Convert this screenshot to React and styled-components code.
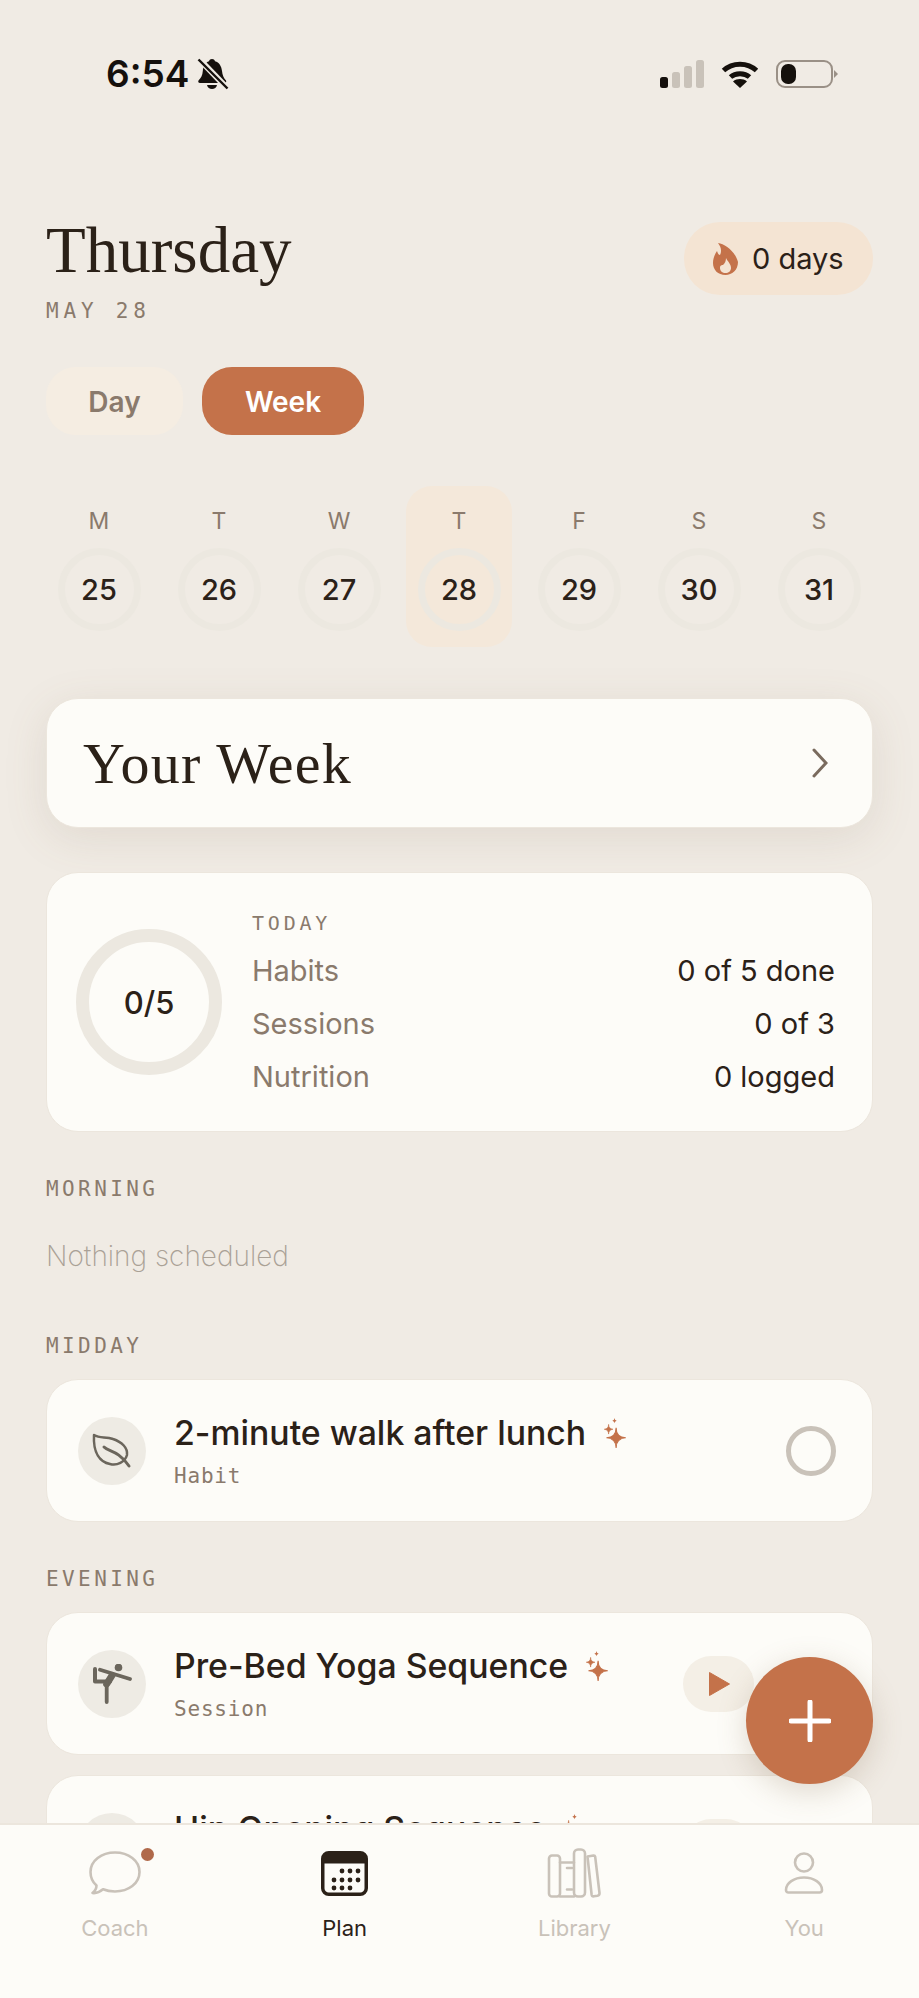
import React from "react";
import styled, { createGlobalStyle } from "styled-components";

const colors = {
  bg: "#f0ebe4",
  card: "#fdfcf8",
  ink: "#2b2118",
  muted: "#8a7a6c",
  faint: "#c9c2b9",
  accent: "#c4724a",
  peach: "#f4e4d3",
  ring: "#ece8e0",
  line: "#ece6dd",
  iconInk: "#6b665c",
};

const sans = `Inter, "Noto Sans", sans-serif`;
const serif = `"Liberation Serif", serif`;
const mono = `"DejaVu Sans Mono", "Liberation Mono", monospace`;

const GlobalStyle = createGlobalStyle`
  html, body {
    margin: 0;
    padding: 0;
    background: ${colors.bg};
  }
  * {
    box-sizing: border-box;
  }
`;

const Page = styled.div`
  position: relative;
  width: 919px;
  height: 1998px;
  display: flex;
  flex-direction: column;
  overflow: hidden;
  background: ${colors.bg};
  font-family: ${sans};
  color: ${colors.ink};
`;

const StatusBar = styled.div`
  display: flex;
  justify-content: space-between;
  align-items: center;
  height: 32px;
  margin-top: 58px;
  padding: 0 81px 0 106px;
  flex: none;
`;

const StatusGroup = styled.div`
  display: flex;
  align-items: center;
  gap: ${(p) => p.$gap}px;
`;

const Time = styled.span`
  font-size: 37px;
  font-weight: 600;
  line-height: 32px;
  color: #15100c;
`;

const Main = styled.main`
  flex: 1;
  min-height: 0;
  overflow: hidden;
  padding: 124px 46px 0;
`;

const Header = styled.header`
  display: flex;
  justify-content: space-between;
  align-items: flex-start;
`;

const Title = styled.h1`
  margin: 0;
  font-family: ${serif};
  font-size: 65px;
  font-weight: 400;
  line-height: 72px;
`;

const DateLine = styled.div`
  margin-top: 12px;
  margin-bottom: -1px;
  font-family: ${mono};
  font-size: 21px;
  line-height: 26px;
  letter-spacing: 4.800px;
  color: ${colors.muted};
`;

const Streak = styled.div`
  display: flex;
  align-items: center;
  gap: 14px;
  width: 189px;
  height: 73px;
  margin-top: 8px;
  padding-left: 29px;
  border-radius: 36px;
  background: ${colors.peach};
  font-size: 29px;
  white-space: nowrap;
`;

const Toggle = styled.div`
  display: flex;
  gap: 19px;
  margin-top: 44px;
`;

const ToggleButton = styled.div`
  display: flex;
  align-items: center;
  justify-content: center;
  width: ${(p) => p.$width}px;
  height: 68px;
  padding-top: 2px;
  border-radius: 30px;
  font-size: 28px;
  font-weight: 600;
  background: ${(p) => (p.$active ? colors.accent : "#f5ede2")};
  color: ${(p) => (p.$active ? "#fff" : colors.muted)};
`;

const Calendar = styled.div`
  display: grid;
  grid-template-columns: repeat(7, 106px);
  gap: 14px;
  margin-top: 51px;
`;

const DayColumn = styled.div`
  display: flex;
  flex-direction: column;
  align-items: center;
  gap: 15px;
  height: 161px;
  padding-top: 23px;
  border-radius: 26px;
  background: ${(p) => (p.$selected ? "#f4e8da" : "transparent")};
`;

const DayLetter = styled.div`
  font-size: 23px;
  line-height: 24px;
  color: ${colors.muted};
`;

const DayCircle = styled.div`
  display: flex;
  align-items: center;
  justify-content: center;
  width: 83px;
  height: 83px;
  border: 7px solid ${colors.ring};
  border-radius: 50%;
  font-size: 29px;
  font-weight: 500;
`;

const Card = styled.div`
  background: ${colors.card};
  border: 1px solid ${colors.line};
  border-radius: 32px;
`;

const WeekCard = styled(Card)`
  display: flex;
  align-items: center;
  justify-content: space-between;
  height: 130px;
  margin-top: 51px;
  padding: 0 44px 0 36px;
  box-shadow: 0 10px 44px rgba(120, 100, 80, 0.13);
`;

const WeekTitle = styled.div`
  padding-top: 2px;
  font-family: ${serif};
  font-size: 58px;
  line-height: 66px;
  letter-spacing: 1.300px;
`;

const TodayCard = styled(Card)`
  display: flex;
  align-items: center;
  gap: 30px;
  height: 260px;
  margin-top: 44px;
  padding: 0 37px 0 29px;
`;

const Ring = styled.div`
  display: flex;
  align-items: center;
  justify-content: center;
  flex: none;
  width: 146px;
  height: 146px;
  border: 13px solid ${colors.ring};
  border-radius: 50%;
  font-size: 31px;
  font-weight: 500;
`;

const Summary = styled.div`
  flex: 1;
  display: flex;
  flex-direction: column;
  gap: 17px;
`;

const SummaryLabel = styled.div`
  margin-bottom: 1px;
  padding-top: 2px;
  font-family: ${mono};
  font-size: 20px;
  line-height: 24px;
  letter-spacing: 3.800px;
  color: ${colors.muted};
`;

const SummaryRow = styled.div`
  display: flex;
  justify-content: space-between;
  font-size: 29px;
  line-height: 36px;
`;

const SummaryName = styled.span`
  color: ${colors.muted};
`;

const Section = styled.section`
  margin-top: 45px;
`;

const SectionLabel = styled.div`
  margin-bottom: 21px;
  font-family: ${mono};
  font-size: 21px;
  line-height: 24px;
  letter-spacing: 3.400px;
  color: ${colors.muted};
`;

const Empty = styled.div`
  padding: 16px 0 15px;
  font-size: 28px;
  font-weight: 200;
  line-height: 36px;
  color: #aaa196;
`;

const ItemList = styled.div`
  display: flex;
  flex-direction: column;
  gap: 20px;
`;

const ItemCard = styled(Card)`
  display: flex;
  align-items: center;
  flex: none;
  height: 143px;
  padding: 0 36px 0 31px;
`;

const ItemIcon = styled.div`
  display: flex;
  align-items: center;
  justify-content: center;
  flex: none;
  width: 68px;
  height: 68px;
  margin-right: 28px;
  border-radius: 50%;
  background: #eeebe4;
`;

const ItemBody = styled.div`
  flex: 1;
  min-width: 0;
`;

const ItemTitle = styled.div`
  display: flex;
  align-items: flex-start;
  gap: 17px;
  font-size: 33.800px;
  font-weight: 500;
  line-height: 40px;
`;

const ItemType = styled.div`
  margin-top: 10px;
  font-family: ${mono};
  font-size: 21px;
  line-height: 26px;
  letter-spacing: 0.800px;
  color: ${colors.muted};
`;

const CheckCircle = styled.div`
  flex: none;
  width: 50px;
  height: 50px;
  border: 5px solid ${colors.faint};
  border-radius: 50%;
`;

const PlayButton = styled.div`
  display: flex;
  align-items: center;
  justify-content: center;
  flex: none;
  width: 71px;
  height: 56px;
  margin-right: 82px;
  border-radius: 28px;
  background: #f4efe6;
`;

const Fab = styled.div`
  position: absolute;
  right: 46px;
  bottom: 214px;
  display: flex;
  align-items: center;
  justify-content: center;
  width: 127px;
  height: 127px;
  border-radius: 50%;
  background: ${colors.accent};
  box-shadow: 0 8px 30px rgba(120, 90, 60, 0.22);
`;

const Nav = styled.nav`
  display: grid;
  grid-template-columns: repeat(4, 1fr);
  flex: none;
  height: 175px;
  padding-top: 23px;
  border-top: 2px solid ${colors.line};
  background: ${colors.card};
`;

const NavItem = styled.div`
  display: flex;
  flex-direction: column;
  align-items: center;
  gap: 15px;
  font-size: 22px;
  line-height: 30px;
  color: ${(p) => (p.$active ? colors.ink : colors.faint)};
`;

const NavIcon = styled.div`
  position: relative;
  display: flex;
  align-items: center;
  justify-content: center;
  height: 50px;
`;

const NavDot = styled.span`
  position: absolute;
  top: 0;
  right: -13px;
  width: 13px;
  height: 13px;
  border-radius: 50%;
  background: #b0694a;
`;

const BellOff = () => (
  <svg width="32" height="32" viewBox="0 0 32 32">
    <path
      d="M15 1c1.500 0 2.600.9 3 2.300 4.300 1.200 6.500 5 7 9.700.4 4 1.500 7 4 9.500.6 1.200 0 2.500-1.500 2.500H3c-1.500 0-2.200-1.300-1.500-2.500 2.500-2.500 4-5 4.300-9.500C6.200 8 8.500 4.500 12 3.300 12.400 1.900 13.500 1 15 1Z"
      fill="#15100c"
    />
    <path d="M10 27h10c-.5 2.500-2.500 4-5 4s-4.500-1.500-5-4Z" fill="#15100c" />
    <path d="M3 2l27 28" stroke={colors.bg} strokeWidth="6" />
    <path d="M1.500 1.500l29 29" stroke="#15100c" strokeWidth="2.400" />
  </svg>
);

const Signal = () => (
  <svg width="44" height="28" viewBox="0 0 44 28">
    <rect x="0" y="17" width="8" height="11" rx="2.500" fill="#15100c" />
    <rect x="12" y="12" width="8" height="16" rx="2.500" fill="#c9c2b9" />
    <rect x="24" y="6" width="8" height="22" rx="2.500" fill="#c9c2b9" />
    <rect x="36" y="0" width="8" height="28" rx="2.500" fill="#c9c2b9" />
  </svg>
);

const Wifi = () => (
  <svg width="38" height="28" viewBox="0 0 38 28">
    <path d="M2.500 10.500C11.500 2 26.500 2 35.500 10.500" fill="none" stroke="#15100c" strokeWidth="5" />
    <path d="M9.500 17C14.500 12.500 23.500 12.500 28.500 17" fill="none" stroke="#15100c" strokeWidth="5" />
    <path d="M19 28l-7-6.500c4-3.200 10-3.200 14 0Z" fill="#15100c" />
  </svg>
);

const Battery = () => (
  <svg width="62" height="28" viewBox="0 0 62 28">
    <rect x="1" y="1" width="55" height="26" rx="8" fill="none" stroke="#9a9086" strokeWidth="2" />
    <rect x="5" y="4" width="15" height="20" rx="7" fill="#15100c" />
    <path d="M58 10l4 4-4 4Z" fill="#9a9086" />
  </svg>
);

const Flame = () => (
  <svg width="25" height="32" viewBox="0 0 25 32">
    <path
      d="M5 0C12 1 22 8 25 19C25 27 19 32 12.500 32C5 32 0 27 0 20C0 15 2 11 4 8C5 11 6 12 7 12C9 8 8 4 5 0Z"
      fill={colors.accent}
    />
    <path
      d="M13 15C15 19 18 21 18 25C18 28 15.500 30 12.500 30C9.500 30 7 28 7 25C7 22 9 22 10 22C12 20 13 18 13 15Z"
      fill={colors.peach}
    />
  </svg>
);

const Chevron = () => (
  <svg width="16" height="30" viewBox="0 0 16 30">
    <path d="M2 2l12 13L2 28" fill="none" stroke="#7a6b5e" strokeWidth="3" strokeLinecap="round" />
  </svg>
);

const SparkleIcon = styled.svg`
  flex: none;
  margin-top: 5px;
`;

const Sparkle = () => (
  <SparkleIcon width="23" height="30" viewBox="0 0 21 28">
    <path d="M12 9Q12 18 21 18.500Q12 19 12 28Q12 19 3 18.500Q12 18 12 9Z" fill={colors.accent} stroke={colors.accent} strokeWidth="1" />
    <path d="M5 6Q5 10 9 10.500Q5 11 5 15Q5 11 1 10.500Q5 10 5 6Z" fill={colors.accent} stroke={colors.accent} strokeWidth=".6" />
    <path d="M10.500 0Q10.500 2 12.500 2.500Q10.500 3 10.500 5Q10.500 3 8.500 2.500Q10.500 2 10.500 0Z" fill={colors.accent} />
  </SparkleIcon>
);

const LeafIcon = () => (
  <svg width="40" height="40" viewBox="0 0 40 40" fill="none" stroke={colors.iconInk} strokeWidth="2.500" strokeLinecap="round" strokeLinejoin="round">
    <path d="M2 4C8 8 14 5 21 8C30 11 36 17 35 24C33 31 25 35 18 33C8 31 1 22 2 4Z" />
    <path d="M12 16C17 21 26 19 37 35" strokeWidth="3" />
  </svg>
);

const YogaIcon = () => (
  <svg width="40" height="40" viewBox="0 0 40 40" fill="none" stroke={colors.iconInk} strokeLinecap="round" strokeLinejoin="round">
    <circle cx="26.500" cy="3.500" r="3.800" fill={colors.iconInk} stroke="none" />
    <path d="M8 5.700L38 15" strokeWidth="3.800" />
    <path d="M3 5V17.500H18" strokeWidth="4" />
    <path d="M20 11.500L14.700 20" strokeWidth="7" />
    <path d="M14.700 18V38" strokeWidth="3.800" />
  </svg>
);

const PlayIcon = () => (
  <svg width="22" height="24" viewBox="0 0 22 24">
    <path d="M1.500 0.500L21.500 12L1.500 23.500Z" fill={colors.accent} stroke={colors.accent} strokeLinejoin="round" />
  </svg>
);

const PlusIcon = () => (
  <svg width="42" height="42" viewBox="0 0 42 42">
    <path d="M21 2V40M2 21H40" stroke="#fff" strokeWidth="5" strokeLinecap="round" />
  </svg>
);

const BubbleIcon = () => (
  <svg width="52" height="44" viewBox="0 0 52 44" fill="none" stroke={colors.faint} strokeWidth="2.600" strokeLinejoin="round">
    <path d="M26 1.500C39.500 1.500 50.500 9.500 50.500 21C50.500 32.500 39.500 40.500 26 40.500C21.500 40.500 17.500 39.800 14 38.300C11.500 40.500 7.500 42.500 3.500 42C6.500 39.500 7.500 37 7.500 34.500C3.500 31 1.500 26.500 1.500 21C1.500 9.500 12.500 1.500 26 1.500Z" />
  </svg>
);

const PlanIcon = () => {
  const dots = [
    [21, 20], [29, 20], [37, 20],
    [13, 29], [21, 29], [29, 29], [37, 29],
    [13, 37], [21, 37], [29, 37],
  ];
  return (
    <svg width="47" height="45" viewBox="0 0 47 45">
      <rect x="1.750" y="1.750" width="43.500" height="41.500" rx="6" fill="none" stroke={colors.ink} strokeWidth="3.500" />
      <path d="M1.500 12V7.500a6 6 0 0 1 6-6h32a6 6 0 0 1 6 6V12Z" fill={colors.ink} stroke={colors.ink} />
      {dots.map(([cx, cy]) => (
        <circle key={`${cx}-${cy}`} cx={cx} cy={cy} r="2.400" fill={colors.ink} />
      ))}
    </svg>
  );
};

const LibraryIcon = () => (
  <svg width="54" height="50" viewBox="0 0 54 50" fill="none" stroke={colors.faint} strokeWidth="2.600" strokeLinejoin="round" strokeLinecap="round">
    <rect x="2" y="7.500" width="11" height="41" rx="3" />
    <path d="M13 14.500H27M13 48.500H27" />
    <path d="M20 20H25M20 41.500H25" />
    <rect x="27" y="1.500" width="11" height="47" rx="4" />
    <path d="M40.500 8.500L46.500 7.500C47.500 7.400 48 7.900 48.200 8.800L52.500 45C52.600 46.500 52 47.500 50.500 47.800L47 48.300C45.700 48.500 44.800 47.800 44.600 46.500L40.500 8.500Z" />
  </svg>
);

const YouIcon = () => (
  <svg width="40" height="42" viewBox="0 0 40 42" fill="none" stroke={colors.faint} strokeWidth="2.600" strokeLinejoin="round">
    <circle cx="20" cy="10.500" r="9" />
    <path d="M2 38C2 31 10 25.500 20 25.500C30 25.500 38 31 38 38C38 39.500 37 40.500 35.500 40.500H4.500C3 40.500 2 39.500 2 38Z" />
  </svg>
);

const days = [
  ["M", 25], ["T", 26], ["W", 27], ["T", 28], ["F", 29], ["S", 30], ["S", 31],
];

const summary = [
  ["Habits", "0 of 5 done"],
  ["Sessions", "0 of 3"],
  ["Nutrition", "0 logged"],
];

function Item({ icon, title, type, session }) {
  return (
    <ItemCard>
      <ItemIcon>{icon}</ItemIcon>
      <ItemBody>
        <ItemTitle>
          {title}
          <Sparkle />
        </ItemTitle>
        <ItemType>{type}</ItemType>
      </ItemBody>
      {session ? (
        <PlayButton>
          <PlayIcon />
        </PlayButton>
      ) : (
        <CheckCircle />
      )}
    </ItemCard>
  );
}

export default function App() {
  return (
    <Page>
      <GlobalStyle />
      <StatusBar>
        <StatusGroup $gap={8}>
          <Time>6:54</Time>
          <BellOff />
        </StatusGroup>
        <StatusGroup $gap={17}>
          <Signal />
          <Wifi />
          <Battery />
        </StatusGroup>
      </StatusBar>

      <Main>
        <Header>
          <div>
            <Title>Thursday</Title>
            <DateLine>MAY 28</DateLine>
          </div>
          <Streak>
            <Flame />
            <span>0 days</span>
          </Streak>
        </Header>

        <Toggle>
          <ToggleButton $width={137}>Day</ToggleButton>
          <ToggleButton $width={162} $active>
            Week
          </ToggleButton>
        </Toggle>

        <Calendar>
          {days.map(([letter, date]) => (
            <DayColumn key={date} $selected={date === 28}>
              <DayLetter>{letter}</DayLetter>
              <DayCircle>{date}</DayCircle>
            </DayColumn>
          ))}
        </Calendar>

        <WeekCard>
          <WeekTitle>Your Week</WeekTitle>
          <Chevron />
        </WeekCard>

        <TodayCard>
          <Ring>0/5</Ring>
          <Summary>
            <SummaryLabel>TODAY</SummaryLabel>
            {summary.map(([name, value]) => (
              <SummaryRow key={name}>
                <SummaryName>{name}</SummaryName>
                <span>{value}</span>
              </SummaryRow>
            ))}
          </Summary>
        </TodayCard>

        <Section>
          <SectionLabel>MORNING</SectionLabel>
          <Empty>Nothing scheduled</Empty>
        </Section>

        <Section>
          <SectionLabel>MIDDAY</SectionLabel>
          <ItemList>
            <Item icon={<LeafIcon />} title="2-minute walk after lunch" type="Habit" />
          </ItemList>
        </Section>

        <Section>
          <SectionLabel>EVENING</SectionLabel>
          <ItemList>
            <Item icon={<YogaIcon />} title="Pre-Bed Yoga Sequence" type="Session" session />
            <Item icon={<YogaIcon />} title="Hip Opening Sequence" type="Session" session />
          </ItemList>
        </Section>
      </Main>

      <Fab>
        <PlusIcon />
      </Fab>

      <Nav>
        <NavItem>
          <NavIcon>
            <BubbleIcon />
            <NavDot />
          </NavIcon>
          Coach
        </NavItem>
        <NavItem $active>
          <NavIcon>
            <PlanIcon />
          </NavIcon>
          Plan
        </NavItem>
        <NavItem>
          <NavIcon>
            <LibraryIcon />
          </NavIcon>
          Library
        </NavItem>
        <NavItem>
          <NavIcon>
            <YouIcon />
          </NavIcon>
          You
        </NavItem>
      </Nav>
    </Page>
  );
}
